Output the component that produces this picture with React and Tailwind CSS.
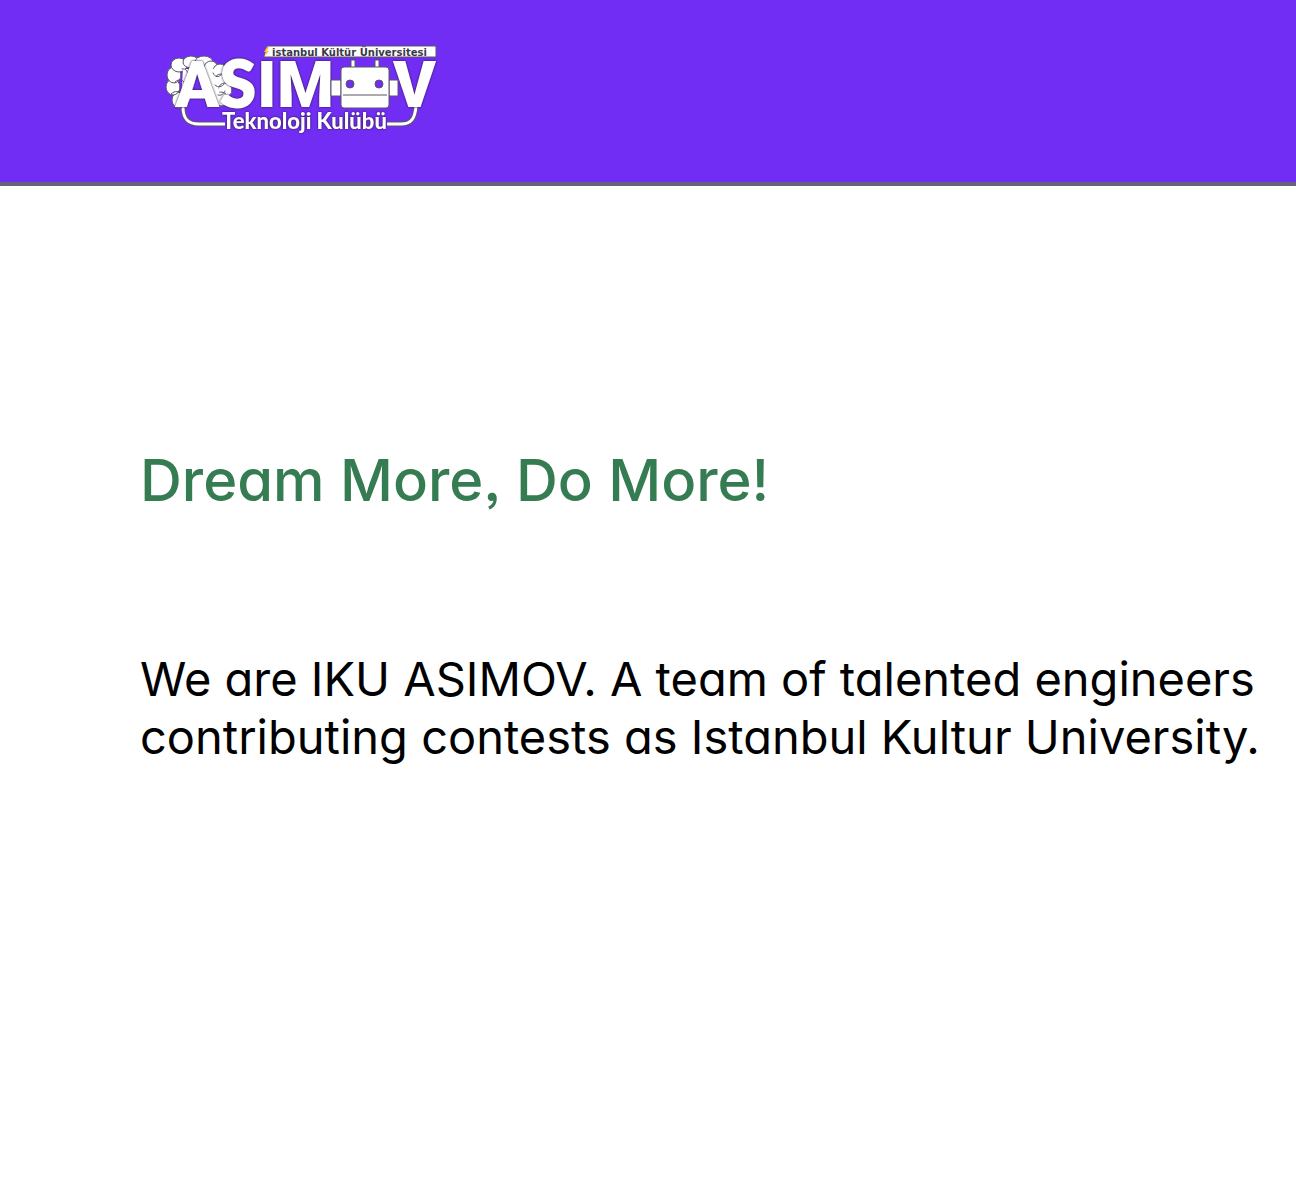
const INK = "#5b5566";

const LOBES = [
  [14, 55, 7, 8],
  [8, 42, 7, 8],
  [9, 30, 7, 8],
  [14, 20, 8, 7],
  [26, 17, 8, 6],
  [39, 17, 9, 6],
  [46, 23, 7, 7],
  [55, 26, 7, 7],
  [56, 36, 7, 7],
  [60, 45, 7, 7],
  [56, 54, 7, 7],
];

function Logo() {
  return (
    <svg
      viewBox="0 0 276 92"
      className="block h-[92px] w-[276px] overflow-visible"
      role="img"
      aria-label="ASIMOV Teknoloji Kulübü"
    >
      {/* cables */}
      <g fill="none" strokeLinejoin="round">
        <path d="M18 62 C18 74 23 79 34 79 H60" stroke={INK} strokeWidth="5" />
        <path d="M18 62 C18 74 23 79 34 79 H60" stroke="#fff" strokeWidth="3" />
        <path d="M222 79 H236 C246 79 250 74 251 61" stroke={INK} strokeWidth="5" />
        <path d="M222 79 H236 C246 79 250 74 251 61" stroke="#fff" strokeWidth="3" />
      </g>

      {/* brain */}
      <g fill="#fff" stroke={INK} strokeWidth="1" strokeLinecap="round">
        {LOBES.map(([cx, cy, rx, ry]) => (
          <ellipse key={`${cx}-${cy}`} cx={cx} cy={cy} rx={rx} ry={ry} />
        ))}
        <path d="M18 24 L50 24 L56 56 L16 56 Z" stroke="none" />
        <path
          fill="none"
          d="M10 37 C14 33 19 35 20 39 M6 49 C10 45 15 46 17 50 M17 24 C21 23 24 27 22 31 M48 28 C50 33 54 32 56 30 M50 40 C53 43 57 42 59 39 M53 50 C56 51 59 49 60 46"
        />
        <path d="M33 26 L44 64 H22 Z" fill="#722df5" stroke="none" />
      </g>

      {/* large letters */}
      <g
        fontFamily="Roboto, 'Open Sans', sans-serif"
        fontWeight="900"
        fontSize="65"
        fill="#fff"
        strokeLinejoin="round"
        className="[filter:drop-shadow(0_0_1px_#1f1b28)]"
      >
        <text x="10" y="62">A</text>
        <text x="55" y="62" fontFamily="Lato, sans-serif" stroke="#fff" strokeWidth="2">S</text>
        <text x="92" y="62">I</text>
        <text x="112" y="62">M</text>
        <text x="228" y="62">V</text>
      </g>

      {/* robot head */}
      <g fill="#fff" stroke={INK} strokeWidth="1">
        <rect x="186" y="15" width="4" height="10" />
        <rect x="210" y="15" width="4" height="10" />
        <rect x="166" y="35" width="10" height="16" />
        <rect x="224" y="35" width="9" height="16" />
        <rect x="176" y="22" width="48" height="41" rx="3" />
        <path d="M178 50 H222" />
      </g>
      <g fill="#722df5" stroke={INK} strokeWidth="1">
        <circle cx="185" cy="39" r="4" />
        <circle cx="214" cy="39" r="4" />
      </g>

      {/* university strip */}
      <path d="M102 1 H271 V12 H99 Z" fill="#fff" stroke={INK} strokeWidth="1" />
      <path d="M102 2 L99 7 H101 L99 12 L104 6 H102 L104 2 Z" fill="#ffc42e" />
      <text
        x="107"
        y="11"
        fontFamily="'DejaVu Sans', sans-serif"
        fontWeight="700"
        fontSize="10"
        fill="#3d3848"
      >
        istanbul Kültür Üniversitesi
      </text>

      <text
        x="57"
        y="84"
        fontFamily="Lato, 'Open Sans', sans-serif"
        fontWeight="900"
        fontSize="22"
        fill="#fff"
        className="[filter:drop-shadow(0_0_1px_#1f1b28)]"
      >
        Teknoloji Kulübü
      </text>
    </svg>
  );
}

export default function App() {
  return (
    <div className="min-h-screen bg-white font-['Inter',sans-serif] [font-feature-settings:'cv11'_1,'ss03'_1]">
      <header className="border-b-4 border-[#646478] bg-[#722df5] py-[45px] pl-[165px]">
        <a href="#" className="inline-block align-top">
          <Logo />
        </a>
      </header>
      <main className="pt-64 pr-8 pl-[140px]">
        <h1 className="text-[58px] leading-[76px] font-medium text-[#367c53]">
          Dream More, Do More!
        </h1>
        <p className="mt-[132px] text-[47px] leading-[58px] text-black">
          We are IKU ASIMOV. A team of talented engineers contributing contests as Istanbul Kultur
          University.
        </p>
      </main>
    </div>
  );
}
